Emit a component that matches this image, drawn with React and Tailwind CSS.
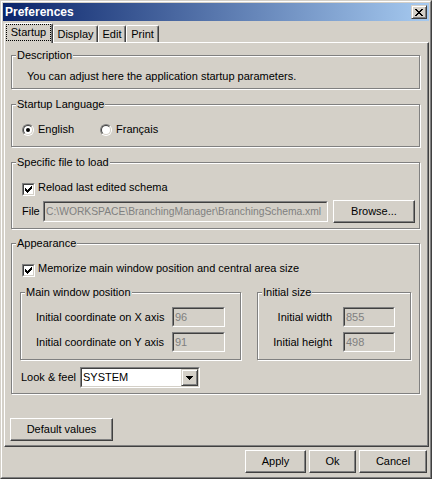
import React from 'react';

// classic win32 look: face #d4d0c8, shadow #808080, dark #404040

const CheckMark = () => (
  <svg width="7" height="7" viewBox="0 0 7 7" shapeRendering="crispEdges">
    <path d="M0 2h1v3H0zM1 3h1v3H1zM2 4h1v3H2zM3 3h1v3H3zM4 2h1v3H4zM5 1h1v3H5zM6 0h1v3H6z" fill="#000" />
  </svg>
);

const CloseGlyph = () => (
  <svg width="8" height="7" viewBox="0 0 8 7" shapeRendering="crispEdges">
    <path
      d="M0 0h2v1H0zM6 0h2v1H6zM1 1h2v1H1zM5 1h2v1H5zM2 2h4v1H2zM3 3h2v1H3zM2 4h4v1H2zM1 5h2v1H1zM5 5h2v1H5zM0 6h2v1H0zM6 6h2v1H6z"
      fill="#000"
    />
  </svg>
);

const DownArrow = () => (
  <svg width="7" height="4" viewBox="0 0 7 4" shapeRendering="crispEdges">
    <path d="M0 0h7v1H0zM1 1h5v1H1zM2 2h3v1H2zM3 3h1v1H3z" fill="#000" />
  </svg>
);

function Button({ className, children }) {
  return (
    <div
      className={`flex items-center justify-center border border-t-white border-l-white border-r-[#404040] border-b-[#404040] shadow-[inset_-1px_-1px_0_#808080] ${className}`}
    >
      {children}
    </div>
  );
}

function SmallButton({ className, children }) {
  return (
    <div
      className={`flex items-center justify-center bg-[#d4d0c8] border border-t-[#d4d0c8] border-l-[#d4d0c8] border-r-[#404040] border-b-[#404040] shadow-[inset_1px_1px_0_#fff,inset_-1px_-1px_0_#808080] ${className}`}
    >
      {children}
    </div>
  );
}

function Sunken({ className, innerClass, children }) {
  return (
    <div className={`border border-t-[#808080] border-l-[#808080] border-r-white border-b-white ${className}`}>
      <div
        className={`h-full border border-t-[#404040] border-l-[#404040] border-r-[#d4d0c8] border-b-[#d4d0c8] ${innerClass}`}
      >
        {children}
      </div>
    </div>
  );
}

function Field({ value, className, textClass }) {
  return (
    <Sunken className={className} innerClass="flex items-center pl-px overflow-hidden bg-[#d4d0c8]">
      <span className={`whitespace-nowrap text-[#808080] ${textClass || ''}`}>{value}</span>
    </Sunken>
  );
}

function CheckBox({ label }) {
  return (
    <div className="flex items-start h-[15px] ml-[2px]">
      <Sunken className="mt-[2px] w-[13px] h-[13px]" innerClass="flex items-center justify-center bg-white">
        <CheckMark />
      </Sunken>
      <span className="ml-[3px]">{label}</span>
    </div>
  );
}

function Radio({ checked, label, className }) {
  return (
    <div className={`flex items-center h-[13px] ${className || ''}`}>
      <div className="w-[12px] h-[12px] rounded-full border border-t-[#808080] border-l-[#808080] border-r-white border-b-white">
        <div className="w-full h-full rounded-full border border-t-[#404040] border-l-[#404040] border-r-[#d4d0c8] border-b-[#d4d0c8] bg-white flex items-center justify-center">
          {checked && <div className="w-[4px] h-[4px] rounded-full bg-black" />}
        </div>
      </div>
      <span className="ml-[4px]">{label}</span>
    </div>
  );
}

function GroupBox({ title, className, children }) {
  return (
    <div
      className={`relative border border-[#808080] shadow-[inset_1px_1px_0_#fff,1px_1px_0_#fff] ${className}`}
    >
      <span className="absolute left-[4px] top-[-7px] px-px bg-[#d4d0c8] leading-[13px] whitespace-nowrap">
        {title}
      </span>
      {children}
    </div>
  );
}

function Tab({ label, className }) {
  return (
    <div
      className={`h-[17px] flex justify-center pt-[2px] border-t border-l border-r border-t-white border-l-white border-r-[#404040] rounded-t-[2px] shadow-[inset_-1px_0_0_#808080] ${className}`}
    >
      {label}
    </div>
  );
}

export default function App() {
  return (
    <div className="w-[432px] h-[479px] font-['Liberation_Sans',Arial,sans-serif] text-[11px] leading-[13px] text-black select-none">
      <div className="h-full bg-[#d4d0c8] border border-t-[#d4d0c8] border-l-[#d4d0c8] border-r-[#404040] border-b-[#404040]">
        <div className="h-full flex flex-col p-px border border-t-white border-l-white border-r-[#808080] border-b-[#808080]">
          {/* title bar */}
          <div className="h-[18px] flex items-center justify-between pl-[2px] pr-[2px] bg-[linear-gradient(to_right,#0a246a,#a6caf0)]">
            <span className="text-white font-bold text-[12px] leading-[14px]">Preferences</span>
            <SmallButton className="w-[16px] h-[14px]">
              <CloseGlyph />
            </SmallButton>
          </div>

          {/* tabs */}
          <div className="h-[21px] ml-px flex items-end">
            <div className="relative z-10 w-[49px] h-[20px] -mb-px bg-[#d4d0c8] border-t border-l border-r border-t-white border-l-white border-r-[#404040] rounded-t-[2px] shadow-[inset_-1px_0_0_#808080]">
              <div className="ml-px w-[45px] h-[17px] flex items-center justify-center border border-dotted border-black">
                Startup
              </div>
            </div>
            <Tab label="Display" className="w-[45px]" />
            <Tab label="Edit" className="w-[28px]" />
            <Tab label="Print" className="w-[33px]" />
          </div>

          {/* tab panel */}
          <div className="ml-px w-[425px] h-[405px] flex flex-col pt-[12px] pl-[6px] pr-[8px] border border-t-white border-l-white border-r-[#404040] border-b-[#404040] shadow-[inset_-1px_-1px_0_#808080]">
            <GroupBox title="Description" className="h-[34px] pt-[14px] pl-[15px]">
              <p>You can adjust here the application startup parameters.</p>
            </GroupBox>

            <GroupBox title="Startup Language" className="mt-[15px] h-[43px] pt-[18px] pl-[10px]">
              <div className="flex">
                <Radio checked label="English" className="w-[78px]" />
                <Radio label="Français" />
              </div>
            </GroupBox>

            <GroupBox title="Specific file to load" className="mt-[15px] h-[67px] pt-[18px] pl-[8px] pr-[4px]">
              <CheckBox label="Reload last edited schema" />
              <div className="mt-[4px] h-[23px] ml-[2px] flex items-center">
                <span className="w-[21px]">File</span>
                <Field
                  value="C:\WORKSPACE\BranchingManager\BranchingSchema.xml"
                  className="w-[285px] h-[21px]"
                  textClass="text-[10.3px]"
                />
                <Button className="ml-[5px] w-[82px] h-[23px]">Browse...</Button>
              </div>
            </GroupBox>

            <GroupBox title="Appearance" className="mt-[14px] h-[151px] pt-[18px] pl-[8px] pr-[8px]">
              <CheckBox label="Memorize main window position and central area size" />
              <div className="mt-[15px] flex">
                <GroupBox title="Main window position" className="w-[221px] h-[68px] pt-[14px] pl-[15px] pr-[15px]">
                  <div className="flex flex-col gap-[5px]">
                    <div className="h-[20px] flex items-center">
                      <span className="flex-1">Initial coordinate on X axis</span>
                      <Field value="96" className="w-[53px] h-[20px]" />
                    </div>
                    <div className="h-[20px] flex items-center">
                      <span className="flex-1">Initial coordinate on Y axis</span>
                      <Field value="91" className="w-[53px] h-[20px]" />
                    </div>
                  </div>
                </GroupBox>
                <GroupBox title="Initial size" className="ml-[16px] w-[154px] h-[68px] pt-[14px] pl-[15px] pr-[15px]">
                  <div className="flex flex-col gap-[5px]">
                    <div className="h-[20px] flex items-center">
                      <span className="flex-1 text-right">Initial width</span>
                      <Field value="855" className="ml-[11px] w-[52px] h-[20px]" />
                    </div>
                    <div className="h-[20px] flex items-center">
                      <span className="flex-1 text-right">Initial height</span>
                      <Field value="498" className="ml-[11px] w-[52px] h-[20px]" />
                    </div>
                  </div>
                </GroupBox>
              </div>
              <div className="mt-[7px] h-[21px] pl-px flex items-center">
                <span className="w-[59px]">Look &amp; feel</span>
                <Sunken className="w-[120px] h-[21px]" innerClass="flex items-center bg-white">
                  <span className="flex-1 pl-px">SYSTEM</span>
                  <SmallButton className="w-[17px] h-[17px]">
                    <DownArrow />
                  </SmallButton>
                </Sunken>
              </div>
            </GroupBox>

            <Button className="mt-[24px] -ml-px w-[103px] h-[23px]">Default values</Button>
          </div>

          {/* dialog buttons */}
          <div className="mt-[3px] pr-[2px] flex justify-end gap-[3px]">
            <Button className="w-[61px] h-[23px]">Apply</Button>
            <Button className="w-[47px] h-[23px]">Ok</Button>
            <Button className="w-[68px] h-[23px]">Cancel</Button>
          </div>
        </div>
      </div>
    </div>
  );
}
